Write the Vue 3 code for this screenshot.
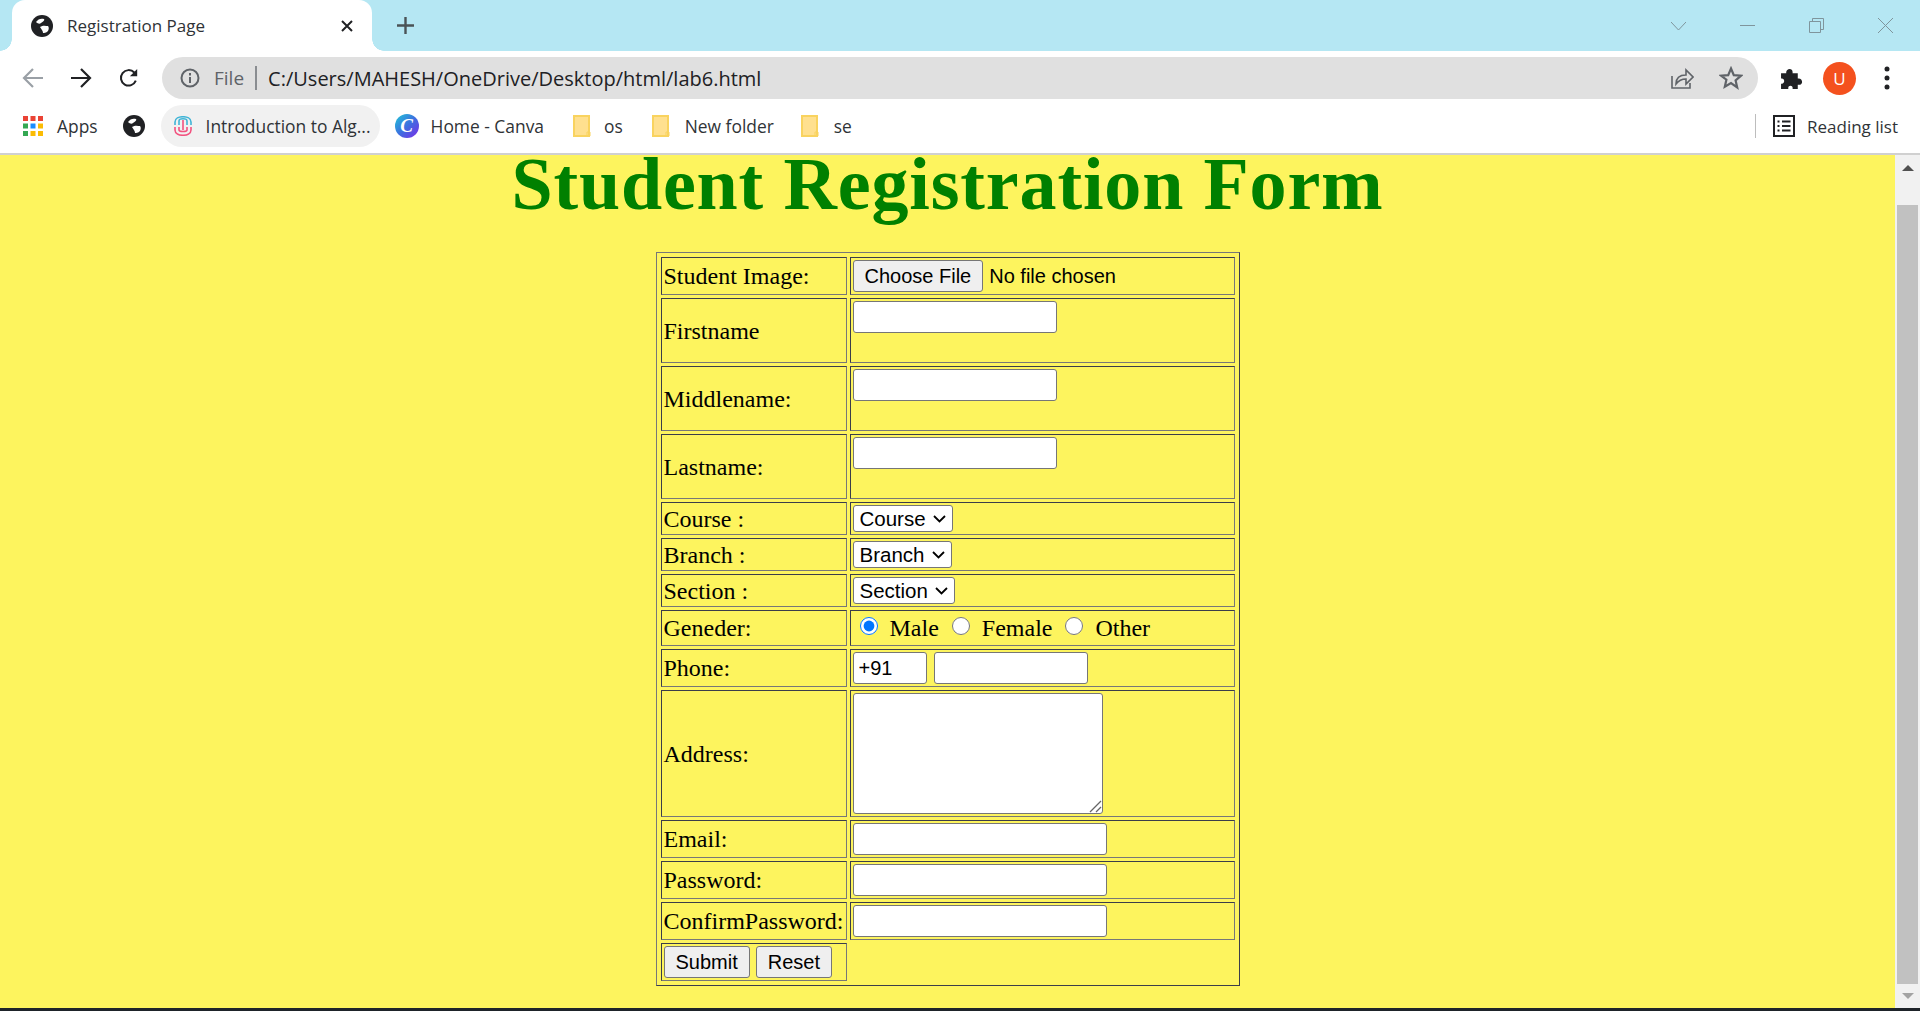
<template>
  <div class="window">
    <div class="tabstrip">
      <div class="tab">
        <svg class="globe" viewBox="0 0 22 22"><circle cx="11" cy="11" r="11" fill="#202124"/><path d="M5 7c2-3 5-4 8-3 1 1-1 3-3 4-1 1-3 1-5-1zM9 12c3-2 6-1 8-1 1 1 1 3 0 5-2 2-4 2-5 2 0-2-1-3-3-6z" fill="#fff"/></svg>
        <span class="tab-title">Registration Page</span>
        <svg class="tab-close" viewBox="0 0 12 12"><path d="M1 1l10 10M11 1L1 11" stroke="#202124" stroke-width="2"/></svg>
      </div>
      <svg class="new-tab" viewBox="0 0 17 17"><path d="M8.5 0v17M0 8.5h17" stroke="#4a5356" stroke-width="2.4"/></svg>
      <div class="win-controls">
        <svg viewBox="0 0 15 15"><path d="M0 4l7.5 8L15 4" fill="none" stroke="#7f959c"/></svg>
        <svg viewBox="0 0 15 15"><path d="M0 7.5h15" stroke="#7f959c"/></svg>
        <svg viewBox="0 0 15 15"><path d="M.5 3.5h11v11H.5zM3.5 3.5v-3h11v11h-3" fill="none" stroke="#7f959c"/></svg>
        <svg viewBox="0 0 15 15"><path d="M0 0l15 15M15 0L0 15" stroke="#7f959c"/></svg>
      </div>
    </div>

    <div class="toolbar">
      <svg class="nav" viewBox="0 0 22 20"><path d="M21 10H2M11 1l-9 9 9 9" fill="none" stroke="#9aa0a6" stroke-width="2.2"/></svg>
      <svg class="nav" viewBox="0 0 22 20"><path d="M1 10h19M11 1l9 9-9 9" fill="none" stroke="#202124" stroke-width="2.2"/></svg>
      <svg class="nav" viewBox="0 0 22 22"><path d="M18.5 14a8.5 8.5 0 1 1-1.7-9" fill="none" stroke="#202124" stroke-width="2.2"/><path d="M20 1v8h-8z" fill="#202124"/></svg>
      <div class="omnibox">
        <svg class="info" viewBox="0 0 20 20"><circle cx="10" cy="10" r="8.5" fill="none" stroke="#5f6368" stroke-width="2"/><path d="M10 9v6M10 5v2.4" stroke="#5f6368" stroke-width="2"/></svg>
        <span class="scheme">File</span>
        <span class="omni-sep"></span>
        <span class="url">C:/Users/MAHESH/OneDrive/Desktop/html/lab6.html</span>
        <svg class="share" viewBox="0 0 23 22"><path d="M1 9v12h18v-5" fill="none" stroke="#5f6368" stroke-width="1.6"/><path d="M5 17c0-6 4-9 10-9V3l7 7-7 7v-5c-4 0-7 1-10 5z" fill="none" stroke="#5f6368" stroke-width="1.6"/></svg>
        <svg class="star" viewBox="0 0 24 24"><path d="M12 2.5l2.8 6.6 7.2.6-5.4 4.7 1.6 7L12 17l-6.200 3.700 1.600-7L2 9.700l7.200-.6z" fill="none" stroke="#5f6368" stroke-width="2.200"/></svg>
      </div>
      <svg class="puzzle" viewBox="0 0 22 22"><path d="M1 6h5c-1-5 7-6 6 0h5v5c5-1 6 7 0 6v4h-5c1-4-5-4-4 0H1v-5c4 1 4-6 0-5z" fill="#202124"/></svg>
      <div class="avatar">U</div>
      <svg class="dots" viewBox="0 0 6 24"><circle cx="3" cy="3" r="2.500" fill="#202124"/><circle cx="3" cy="12" r="2.500" fill="#202124"/><circle cx="3" cy="21" r="2.500" fill="#202124"/></svg>
    </div>

    <div class="bookmarks">
      <div class="bm bm-apps">
        <svg class="apps-grid" viewBox="0 0 20 20">
          <rect v-for="d in appDots" :key="d.x + '-' + d.y" :x="d.x" :y="d.y" width="5" height="5" :fill="d.c"/>
        </svg>
        <span>Apps</span>
      </div>
      <svg class="globe globe-bm" viewBox="0 0 22 22"><circle cx="11" cy="11" r="11" fill="#202124"/><path d="M5 7c2-3 5-4 8-3 1 1-1 3-3 4-1 1-3 1-5-1zM9 12c3-2 6-1 8-1 1 1 1 3 0 5-2 2-4 2-5 2 0-2-1-3-3-6z" fill="#fff"/></svg>
      <div class="bm bm-pill">
        <svg class="clip" viewBox="0 0 20 20"><path d="M2 9V6c0-7 16-7 16 0v3M6 9V5c0-3 8-3 8 0v4" fill="none" stroke="#3fb4d6" stroke-width="1.600"/><path d="M2 11v3c0 7 16 7 16 0v-3M6 11v3c0 2 8 2 8 0v-3M10 4v10" fill="none" stroke="#f2527f" stroke-width="1.600"/></svg>
        <span>Introduction to Alg...</span>
      </div>
      <div class="bm bm-canva">
        <div class="canva-icon">C</div>
        <span>Home - Canva</span>
      </div>
      <div v-for="f in folders" :key="f.name" class="bm bm-folder" :class="f.cls">
        <svg class="folder" viewBox="0 0 18 22"><path d="M1 1h15v20H1z" fill="#ffe08f" stroke="#f9d35f" stroke-width="2"/><path d="M14 21v-4h3v4" fill="none" stroke="#f9d35f"/></svg>
        <span>{{ f.name }}</span>
      </div>
      <div class="bm-right">
        <span class="bm-sep"></span>
        <svg class="reading" viewBox="0 0 22 22"><path d="M1 1h20v20H1z" fill="none" stroke="#202124" stroke-width="2"/><path d="M4.500 6.500h2M9 6.500h8.500M4.500 11h2M9 11h8.500M4.500 15.500h2M9 15.500h8.500" stroke="#202124" stroke-width="2"/></svg>
        <span>Reading list</span>
      </div>
    </div>

    <div class="viewport">
      <div class="page">
        <h1>Student Registration Form</h1>
        <table class="form">
          <tbody>
            <tr class="r-file">
              <td>Student Image:</td>
              <td><input type="file" class="file"></td>
            </tr>
            <tr v-for="n in names" :key="n" class="r-name">
              <td>{{ n }}</td>
              <td><input type="text" class="short"></td>
            </tr>
            <tr v-for="s in selects" :key="s.label" class="r-select">
              <td>{{ s.label }}</td>
              <td>
                <select class="sel" :class="s.cls"><option>{{ s.value }}</option></select>
              </td>
            </tr>
            <tr class="r-gender">
              <td>Geneder:</td>
              <td class="gender">
                <input type="radio" name="g" checked><span>Male</span>
                <input type="radio" name="g"><span>Female</span>
                <input type="radio" name="g"><span>Other</span>
              </td>
            </tr>
            <tr class="r-wide">
              <td>Phone:</td>
              <td><input type="text" class="code" value="+91"><input type="text" class="tel"></td>
            </tr>
            <tr>
              <td>Address:</td>
              <td class="addr"><textarea></textarea></td>
            </tr>
            <tr v-for="w in wide" :key="w" class="r-wide">
              <td>{{ w }}</td>
              <td><input type="text" class="long"></td>
            </tr>
            <tr class="r-wide">
              <td class="actions"><button>Submit</button><button>Reset</button></td>
            </tr>
          </tbody>
        </table>
      </div>
      <div class="scrollbar">
        <span class="arrow up"></span>
        <div class="thumb"></div>
        <span class="arrow down"></span>
      </div>
    </div>
    <div class="taskbar"></div>
  </div>
</template>

<script setup>
const names = ["Firstname", "Middlename:", "Lastname:"];
const selects = [
  { label: "Course :", value: "Course", cls: "s-course" },
  { label: "Branch :", value: "Branch", cls: "s-branch" },
  { label: "Section :", value: "Section", cls: "s-section" },
];
const wide = ["Email:", "Password:", "ConfirmPassword:"];
const folders = [
  { name: "os", cls: "f-os" },
  { name: "New folder", cls: "f-new" },
  { name: "se", cls: "f-se" },
];

const APP_COLORS = [
  "#ea4335", "#ea4335", "#ea4335",
  "#34a853", "#1a8cff", "#fbbc04",
  "#34a853", "#fbbc04", "#fbbc04",
];
const appDots = APP_COLORS.map((c, i) => ({ x: (i % 3) * 7.5, y: Math.floor(i / 3) * 7.5, c }));
</script>

<style>
html, body { margin: 0; height: 100%; overflow: hidden; }
</style>

<style scoped>
.window {
  height: 1011px;
  display: flex;
  flex-direction: column;
  overflow: hidden;
  font-family: "Open Sans", "Noto Sans", sans-serif;
  color: #202124;
  background: #fff;
}

/* tab strip */
.tabstrip {
  height: 51px;
  flex-shrink: 0;
  background: #b5e7f3;
  display: flex;
  align-items: center;
  padding-left: 12px;
}
.tab {
  position: relative;
  width: 360px;
  height: 51px;
  box-sizing: border-box;
  background: #fff;
  border-radius: 13px 13px 0 0;
  display: flex;
  align-items: center;
  padding: 0 19px 0 19px;
  align-self: flex-start;
}
.tab::before, .tab::after {
  content: "";
  position: absolute;
  bottom: 0;
  width: 12px;
  height: 12px;
}
.tab::before { left: -12px; background: radial-gradient(circle at 0 0, transparent 11.5px, #fff 12px); }
.tab::after { right: -12px; background: radial-gradient(circle at 100% 0, transparent 11.5px, #fff 12px); }
.globe { width: 22px; height: 22px; flex-shrink: 0; }
.tab-title { margin-left: 14px; font-size: 17px; flex: 1; color: #2f3337; }
.tab-close { width: 12px; height: 12px; }
.new-tab { width: 17px; height: 17px; margin-left: 25px; }
.win-controls {
  margin-left: auto;
  display: flex;
  gap: 54px;
  padding-right: 27px;
}
.win-controls svg { width: 15px; height: 15px; }

/* toolbar */
.toolbar {
  height: 51px;
  flex-shrink: 0;
  display: flex;
  align-items: center;
  padding: 0 0 0 22px;
  box-sizing: border-box;
}
.nav { width: 22px; height: 20px; margin-right: 26px; }
.nav:nth-child(3) { margin-right: 22px; }
.omnibox {
  width: 1596px;
  height: 42px;
  margin-top: 3px;
  box-sizing: border-box;
  background: #e0e0e0;
  border-radius: 21px;
  display: flex;
  align-items: center;
  padding: 0 15px 0 18px;
}
.nav, .puzzle, .avatar, .dots { margin-top: 3px; }
.info { width: 20px; height: 20px; }
.scheme { margin-left: 14px; font-size: 19px; color: #5f6368; }
.omni-sep { width: 2px; height: 24px; background: #8a8d91; margin: 0 11px 0 11px; }
.url { font-size: 20px; color: #202124; flex: 1; }
.share { width: 23px; height: 22px; margin-right: 25px; }
.star { width: 24px; height: 24px; }
.puzzle { width: 23px; height: 23px; margin-left: 22px; }
.avatar {
  width: 33px;
  height: 33px;
  border-radius: 50%;
  background: #f4511e;
  color: #fff;
  font-size: 17px;
  display: flex;
  align-items: center;
  justify-content: center;
  margin-left: 20px;
}
.dots { width: 6px; height: 24px; margin-left: 28px; }

/* bookmarks bar */
.bookmarks {
  height: 51px;
  flex-shrink: 0;
  box-sizing: border-box;
  display: flex;
  align-items: center;
  padding: 0 0 3px 23px;
  font-size: 17.400px;
  color: #2f3337;
}
.bm { display: flex; align-items: center; }
.apps-grid { width: 20px; height: 20px; margin-right: 14px; }
.globe-bm { margin-left: 25px; }
.bm-pill {
  height: 42px;
  width: 219px;
  box-sizing: border-box;
  margin-left: 16px;
  background: #f1f1f1;
  border-radius: 21px;
  padding-left: 12px;
  white-space: nowrap;
}
.clip { width: 20px; height: 20px; margin-right: 13px; }
.bm-canva { margin-left: 15px; }
.canva-icon {
  width: 24px;
  height: 24px;
  border-radius: 50%;
  background: linear-gradient(135deg, #1fc8d6, #3d6fe0 50%, #7d2ae8);
  color: #fff;
  font: italic 700 19px/24px "Liberation Serif", serif;
  text-align: center;
  margin-right: 12px;
}
.folder { width: 18px; height: 22px; margin-right: 15px; }
.f-os .folder { margin-right: 13px; }
.f-os { margin-left: 29px; }
.f-new { margin-left: 29px; }
.f-se { margin-left: 27px; }
.bm-right { margin-left: auto; display: flex; align-items: center; padding-right: 22px; font-size: 17px; }
.bm-sep { width: 1px; height: 24px; background: #bdbdbd; margin-right: 17px; }
.reading { width: 22px; height: 22px; margin-right: 12px; }

/* page */
.viewport {
  flex: 1;
  min-height: 0;
  display: flex;
  border-top: 2px solid #d0d0d0;
}
.page {
  flex: 1;
  background: #fdf45e;
  color: #000;
  font-family: "Liberation Serif", "Times New Roman", serif;
}
h1 {
  margin: 0 0 16px;
  text-align: center;
  color: #008000;
  font-family: "Liberation Serif", serif;
  font-weight: 700;
  font-size: 74px;
  letter-spacing: 0.85px;
  line-height: 58px;
  height: 81px;
}
.form {
  margin: 0 auto;
  width: 583px;
  box-sizing: border-box;
  border-collapse: separate;
  border-spacing: 3px;
  padding: 1px;
  font-size: 24px;
  border: 1px solid #3b3d4a;
  border-top-color: #777;
  border-left-color: #777;
}
.form td {
  border: 1px solid #3b3d4a;
  border-right-color: #777;
  border-bottom-color: #777;
  padding: 2px;
  line-height: 26px;
  white-space: nowrap;
}
.form td:first-child { width: 180px; }

input[type="text"], textarea, select {
  box-sizing: border-box;
  border: 1px solid #767676;
  border-radius: 3px;
  background: #fff;
  font-family: "Liberation Sans", Arial, sans-serif;
  margin: 0;
  vertical-align: top;
}
.r-file td { height: 32px; }
.file {
  font-family: "Liberation Sans", Arial, sans-serif;
  font-size: 20px;
  vertical-align: middle;
}
.file::file-selector-button {
  font: inherit;
  height: 32px;
  padding: 0 11px;
  border: 1px solid #767676;
  border-radius: 3px;
  background: #efefef;
  margin-right: 6px;
}
.r-name td { height: 59px; }
.r-name td:last-child { vertical-align: top; }
.short { width: 204px; height: 32px; display: block; }
.r-select td { height: 27px; }
.sel {
  height: 27px;
  font-size: 20.500px;
  padding: 0 0 0 6px;
  display: block;
  appearance: none;
  background: #fff url("data:image/svg+xml,%3Csvg xmlns='http://www.w3.org/2000/svg' width='13' height='8'%3E%3Cpath d='M1 1l5.500 5.500L12 1' fill='none' stroke='%23000' stroke-width='1.800'/%3E%3C/svg%3E") no-repeat right 6px center;
}
.s-course { width: 100px; }
.s-branch { width: 99px; }
.s-section { width: 102px; }
.r-gender td { height: 30px; }
.gender input { width: 18px; height: 18px; margin: 0 12px 0 7px; vertical-align: 1px; accent-color: #0075ff; }
.gender span { margin-right: 6px; }
.r-wide td { height: 32px; }
.code { width: 74px; height: 32px; font-size: 20px; padding: 0 5px; }
.code + .tel { width: 154px; height: 32px; margin-left: 7px; }
.addr textarea {
  display: block;
  width: 250px;
  height: 121px;
}
.addr textarea::-webkit-resizer {
  background: url("data:image/svg+xml,%3Csvg xmlns='http://www.w3.org/2000/svg' width='15' height='15'%3E%3Cpath d='M3 14L14 3M9 14l5-5' stroke='%23666' stroke-width='1.300'/%3E%3C/svg%3E") no-repeat center;
}
.long { width: 254px; height: 32px; display: block; }
.actions button {
  height: 32px;
  padding: 0 11px;
  font: 20px "Liberation Sans", Arial, sans-serif;
  border: 1px solid #767676;
  border-radius: 3px;
  background: #efefef;
  color: #000;
  vertical-align: top;
}
.actions button + button { margin-left: 6px; }

/* scrollbar */
.scrollbar {
  width: 25px;
  flex-shrink: 0;
  background: #f1f1f1;
  display: flex;
  flex-direction: column;
  align-items: center;
}
.arrow { width: 0; height: 0; border-left: 6px solid transparent; border-right: 6px solid transparent; }
.arrow.up { border-bottom: 6px solid #505050; margin-top: 10px; }
.arrow.down { border-top: 6px solid #a3a3a3; margin-top: 9px; }
.thumb { width: 21px; height: 779px; background: #c1c1c1; margin-top: 34px; }

.taskbar { height: 3px; flex-shrink: 0; background: #1e2329; }
</style>
